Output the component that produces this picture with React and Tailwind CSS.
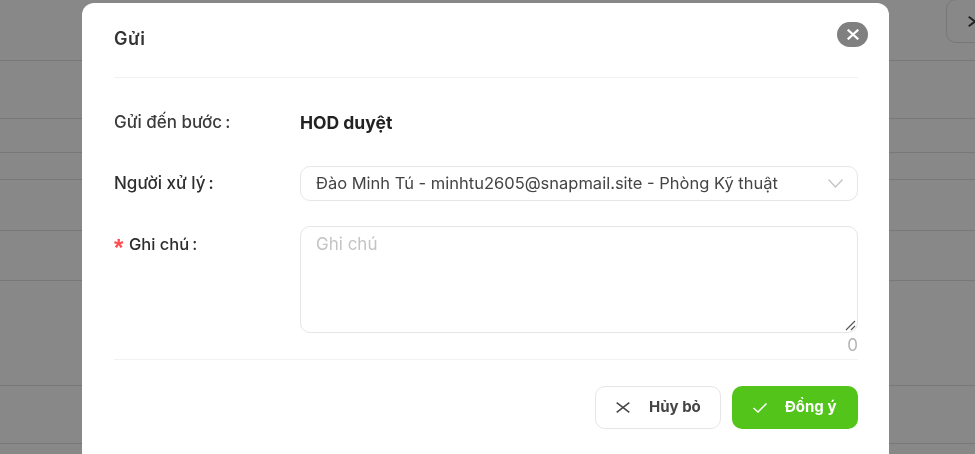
import React from "react";

const rows = [58, 58, 34, 27, 51, 50, 105, 58];

function WideX({ className, width = 13, height = 11, sw = 1.5 }) {
  return (
    <svg className={className} width={width} height={height} viewBox={`0 0 ${width} ${height}`} fill="none" stroke="currentColor" strokeWidth={sw}>
      <path d={`M0.7 0.7 L${width - 0.7} ${height - 0.7} M${width - 0.7} 0.7 L0.7 ${height - 0.7}`} />
    </svg>
  );
}

function Colon() {
  return <span className="ml-[3px]">:</span>;
}

export default function App() {
  return (
    <div className="relative w-[975px] h-[454px] overflow-hidden bg-[#888888] font-['Inter','Noto_Sans',sans-serif] blur-[0.3px]">
      <div className="flex flex-col pt-[3px]">
        {rows.map((h, i) => (
          <div key={i} style={{ height: h }} className="border-b border-[#787878]" />
        ))}
      </div>
      <div className="absolute left-[946px] top-[-1px] w-[58px] h-[44px] rounded-[10px] border border-[#777777] flex items-center justify-center">
        <WideX className="text-[#222222]" width={14} height={11} sw={1.8} />
      </div>
      <div className="absolute left-[82px] top-[3px] w-[807px] h-[470px] bg-white rounded-t-[12px] pl-[32px] pr-[31px] flex flex-col">
        <div className="h-[75px] border-b border-[#f2f2f2] flex items-start justify-between">
          <span className="mt-[26px] text-[18px] leading-5 font-semibold tracking-[0.6px] text-[#333333]">Gửi</span>
          <span className="mt-[19px] mr-[-10px] w-[31px] h-[25px] rounded-full bg-[#808080] flex items-center justify-center">
            <WideX className="text-white" width={12} height={11} sw={2.2} />
          </span>
        </div>

        <div className="flex items-center mt-[35px] h-[20px]">
          <label className="w-[186px] text-[17px] font-medium text-[#3c3c3c] whitespace-nowrap">Gửi đến bước<Colon /></label>
          <span className="text-[17.5px] font-bold text-[#222222]">HOD duyệt</span>
        </div>

        <div className="flex items-center mt-[33px]">
          <label className="w-[186px] text-[17px] font-medium text-[#2e2e2e] whitespace-nowrap">Người xử lý<Colon /></label>
          <div className="flex-1 h-[35px] rounded-[10px] border border-[#e6e6e6] flex items-center justify-between pl-[15px] pr-[14px]">
            <span className="text-[16.5px] text-[#444444] whitespace-nowrap">Đào Minh Tú - minhtu2605@snapmail.site - Phòng Kỹ thuật</span>
            <svg width="15" height="9" viewBox="0 0 15 9" fill="none" stroke="#c4c4c4" strokeWidth="1.4">
              <path d="M0.5 0.5 L7.5 8 L14.5 0.5" />
            </svg>
          </div>
        </div>

        <div className="flex items-start mt-[25px]">
          <label className="w-[186px] mt-[6px] text-[16.5px] font-medium text-[#2e2e2e] flex items-center whitespace-nowrap">
            <span className="w-[15px] leading-none translate-y-[4px] font-['Liberation_Sans',sans-serif] font-bold text-[24px] text-[#ff4d4f]">*</span>
            Ghi chú<Colon />
          </label>
          <div className="flex-1 flex flex-col">
            <div className="relative h-[107px] rounded-[10px] border border-[#e6e6e6] pl-[15px] pt-[5px]">
              <span className="text-[17px] text-[#c4c4c4]">Ghi chú</span>
              <svg className="absolute right-[1px] bottom-[1px] w-[11px] h-[11px]" viewBox="0 0 11 11" fill="none" stroke="#555555" strokeWidth="1.1">
                <path d="M1 10 L10 1 M6 10 L10 6" />
              </svg>
            </div>
            <span className="self-end text-[17px] leading-[20px] mt-[2px] text-[#b5b5b5]">0</span>
          </div>
        </div>

        <div className="border-t border-[#f2f2f2] mt-[4px] pt-[26px] flex justify-end gap-[11px]">
          <button className="w-[126px] h-[43px] rounded-[10px] border border-[#e6e6e6] bg-white flex items-center pl-[20px] gap-[19px] text-[15px] font-bold text-[#444444]">
            <WideX className="text-[#444444]" width={14} height={11} sw={1.5} />
            Hủy bỏ
          </button>
          <button className="w-[126px] h-[43px] rounded-[10px] bg-[#52c41a] flex items-center pl-[21px] gap-[18px] text-[15px] font-bold text-white">
            <svg width="14" height="10" viewBox="0 0 14 10" fill="none" stroke="white" strokeWidth="1.5">
              <path d="M0.5 5 L5 9 L13.5 0.5" />
            </svg>
            Đồng ý
          </button>
        </div>
      </div>
    </div>
  );
}
